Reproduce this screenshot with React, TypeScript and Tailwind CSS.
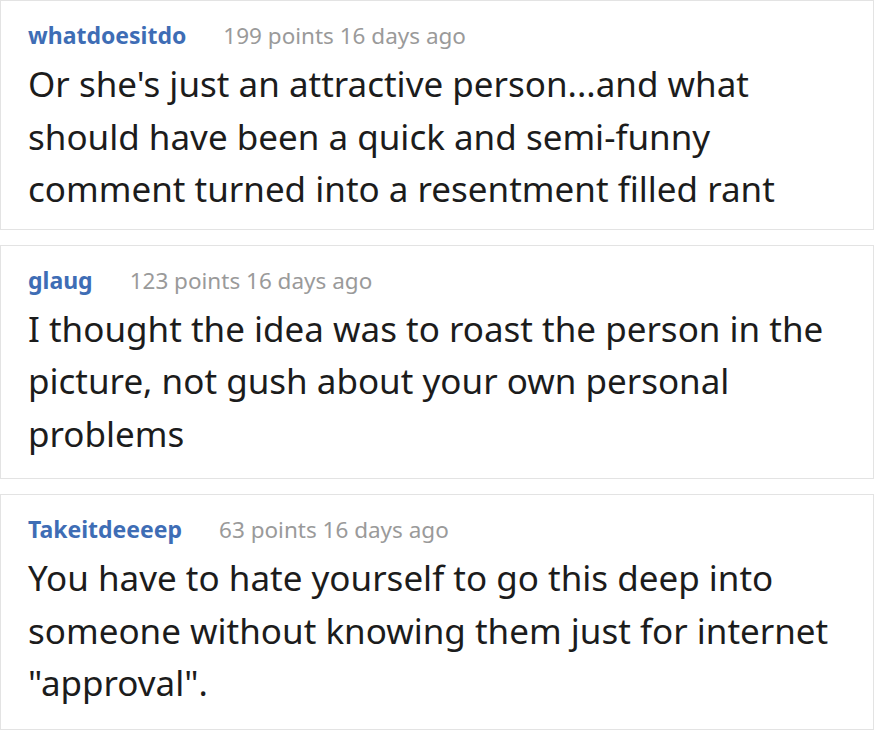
export default function App() {
  const comments = [
    {
      user: "whatdoesitdo",
      meta: "199 points 16 days ago",
      text: "Or she's just an attractive person...and what should have been a quick and semi-funny comment turned into a resentment filled rant",
      pad: "pb-[13px]",
    },
    {
      user: "glaug",
      meta: "123 points 16 days ago",
      text: "I thought the idea was to roast the person in the picture, not gush about your own personal problems",
      pad: "pb-[18px]",
    },
    {
      user: "Takeitdeeeep",
      meta: "63 points 16 days ago",
      text: 'You have to hate yourself to go this deep into someone without knowing them just for internet "approval".',
      pad: "pb-[19px]",
    },
  ];
  return (
    <div className="w-[877px] h-[730px] bg-white flex flex-col gap-[15px]" style={{ fontFamily: '"Noto Sans", sans-serif' }}>
      {comments.map((c) => (
        <div key={c.user} className={`w-[874px] border border-[#e3e3e3] pl-[27px] pr-[30px] pt-[20px] ${c.pad}`}>
          <div className="flex items-baseline h-[28px] leading-[28px]">
            <span className="text-[23px] font-bold text-[#3e6db5]">{c.user}</span>
            <span className="ml-[37px] text-[22.5px] text-[#9a9a9a]">{c.meta}</span>
          </div>
          <p className="mt-[9px] text-[35px] leading-[52.5px] text-[#1c1c1c]">{c.text}</p>
        </div>
      ))}
    </div>
  );
}
